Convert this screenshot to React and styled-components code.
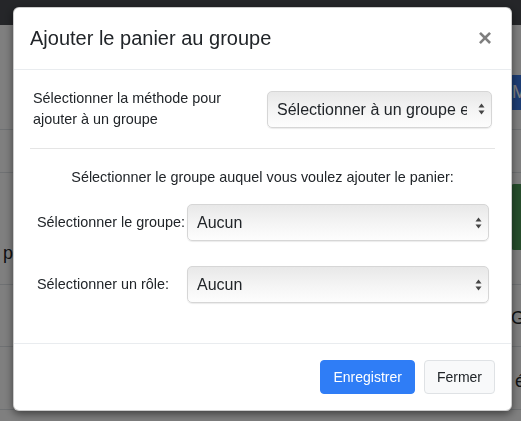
import styled, { createGlobalStyle } from "styled-components";

const GlobalStyle = createGlobalStyle`
    html, body {
        margin: 0;
        padding: 0;
        height: 100%;
        overflow: hidden;
    }
    body {
        font-family: "Liberation Sans", Arial, sans-serif;
        color: #212529;
        background: #fff;
    }
    * {
        box-sizing: border-box;
    }
`;

const SelectArrows = () => (
    <svg width="7" height="12" viewBox="0 0 7 12">
        <path d="M3.5 0.5 L6.5 4.6 L0.5 4.6 Z" fill="#444" />
        <path d="M3.5 11.5 L6.5 7.4 L0.5 7.4 Z" fill="#444" />
    </svg>
);

function Select({ value, width }) {
    return (
        <SelectWrap $width={width}>
            <SelectBox defaultValue={value}>
                <option>{value}</option>
            </SelectBox>
            <ArrowSlot>
                <SelectArrows />
            </ArrowSlot>
        </SelectWrap>
    );
}

function BackgroundPage() {
    return (
        <Page>
            <Navbar />
            <Toolbar>
                <PageButton>M</PageButton>
            </Toolbar>
            <PageRow $height={43} />
            <PageRow $height={112}>
                <RowText>p</RowText>
                <GreenBlock />
            </PageRow>
            <PageRow $height={62}>
                <RowText $right>G</RowText>
            </PageRow>
            <PageRow $height={63}>
                <RowText $right>é</RowText>
            </PageRow>
        </Page>
    );
}

export default function App() {
    return (
        <>
            <GlobalStyle />
            <BackgroundPage />
            <Backdrop>
                <Modal>
                    <ModalHeader>
                        <Title>Ajouter le panier au groupe</Title>
                        <CloseButton aria-label="Close">×</CloseButton>
                    </ModalHeader>
                    <ModalBody>
                        <MethodRow>
                            <MethodLabel>
                                Sélectionner la méthode pour
                                <br />
                                ajouter à un groupe
                            </MethodLabel>
                            <Select value="Sélectionner à un groupe existant" width="225px" />
                        </MethodRow>
                        <Divider />
                        <Intro>Sélectionner le groupe auquel vous voulez ajouter le panier:</Intro>
                        <FieldRow>
                            <FieldLabel>Sélectionner le groupe:</FieldLabel>
                            <Select value="Aucun" width="302px" />
                        </FieldRow>
                        <FieldRow>
                            <FieldLabel>Sélectionner un rôle:</FieldLabel>
                            <Select value="Aucun" width="302px" />
                        </FieldRow>
                    </ModalBody>
                    <ModalFooter>
                        <Button $primary>Enregistrer</Button>
                        <Button>Fermer</Button>
                    </ModalFooter>
                </Modal>
            </Backdrop>
        </>
    );
}

const Page = styled.div`
    display: flex;
    flex-direction: column;
    height: 421px;
    background: #fff;
`;

const Navbar = styled.div`
    height: 25px;
    background: #4a4d52;
    flex-shrink: 0;
`;

const Toolbar = styled.div`
    display: flex;
    justify-content: flex-end;
    align-items: flex-start;
    height: 105px;
    padding-top: 50px;
    border-bottom: 1px solid #dee2e6;
    flex-shrink: 0;
`;

const PageButton = styled.div`
    width: 30px;
    height: 35px;
    background: #3a7ae8;
    color: #fff;
    font-size: 18px;
    line-height: 35px;
    padding-left: 3px;
    margin-right: -18px;
`;

const PageRow = styled.div`
    display: flex;
    align-items: center;
    justify-content: space-between;
    height: ${(p) => p.$height}px;
    border-bottom: 1px solid #dee2e6;
    flex-shrink: 0;
`;

const RowText = styled.span`
    font-size: 18px;
    margin-left: ${(p) => (p.$right ? "auto" : "3px")};
    margin-right: ${(p) => (p.$right ? "-4px" : "0")};
    margin-top: ${(p) => (p.$right ? "6px" : "50px")};
`;

const GreenBlock = styled.div`
    width: 20px;
    height: 66px;
    background: #4d9b58;
    margin-right: -10px;
    margin-top: -24px;
    border-radius: 3px;
`;

const Backdrop = styled.div`
    position: fixed;
    inset: 0;
    background: rgba(0, 0, 0, 0.5);
`;

const Modal = styled.div`
    display: flex;
    flex-direction: column;
    width: 499px;
    margin: 7px 0 0 13px;
    background: #fff;
    border: 1px solid rgba(0, 0, 0, 0.2);
    border-radius: 6px;
    box-shadow: 0 3px 8px rgba(0, 0, 0, 0.5);
`;

const ModalHeader = styled.div`
    display: flex;
    align-items: flex-start;
    justify-content: space-between;
    padding: 15px 16px 16px 16px;
    border-bottom: 1px solid #e9ecef;
`;

const Title = styled.h5`
    margin: 0;
    font-size: 20px;
    font-weight: 400;
    line-height: 1.5;
    color: #212529;
`;

const CloseButton = styled.button`
    background: none;
    border: 0;
    padding: 0;
    margin: 0 3px 0 0;
    font-family: "Liberation Sans", Arial, sans-serif;
    font-size: 24px;
    font-weight: 700;
    line-height: 30px;
    color: #000;
    opacity: 0.5;
    text-shadow: 0 1px 0 #fff;
`;

const ModalBody = styled.div`
    display: flex;
    flex-direction: column;
    padding: 18px 16px 40px;
`;

const MethodRow = styled.div`
    display: flex;
    align-items: center;
    justify-content: space-between;
    padding: 0 3px;
`;

const MethodLabel = styled.label`
    font-size: 14.4px;
    line-height: 21px;
    color: #212529;
`;

const Divider = styled.hr`
    width: 100%;
    margin: 18px 0;
    border: 0;
    border-top: 1px solid #e5e5e5;
`;

const Intro = styled.p`
    margin: 0 0 16px;
    text-align: center;
    font-size: 14.4px;
    line-height: 21px;
`;

const FieldRow = styled.div`
    display: flex;
    align-items: center;
    justify-content: space-between;
    padding: 0 6px 0 7px;
    & + & {
        margin-top: 25px;
    }
`;

const FieldLabel = styled.label`
    font-size: 14.4px;
    line-height: 21px;
`;

const SelectWrap = styled.div`
    position: relative;
    width: ${(p) => p.$width};
    height: 37px;
`;

const SelectBox = styled.select`
    appearance: none;
    width: 100%;
    height: 100%;
    padding: 0 24px 0 9px;
    font-family: "Liberation Sans", Arial, sans-serif;
    font-size: 16px;
    color: #212529;
    border: 1px solid #d6d6d6;
    border-radius: 5px;
    background: linear-gradient(#e8e8e8, #f5f5f5 55%, #fdfdfd);
    box-shadow: 0 1px 1px rgba(0, 0, 0, 0.08);
    outline: none;
`;

const ArrowSlot = styled.span`
    position: absolute;
    right: 7px;
    top: 50%;
    transform: translateY(-50%);
    display: flex;
    pointer-events: none;
`;

const ModalFooter = styled.div`
    display: flex;
    justify-content: flex-end;
    align-items: center;
    gap: 9px;
    padding: 16px;
    border-top: 1px solid #e9ecef;
`;

const Button = styled.button`
    font-family: "Liberation Sans", Arial, sans-serif;
    font-size: 14px;
    line-height: 20px;
    padding: 6px 12px;
    border-radius: 4px;
    border: 1px solid ${(p) => (p.$primary ? "#2f7df6" : "#dfe2e5")};
    background: ${(p) => (p.$primary ? "#2f7df6" : "#f8f9fa")};
    color: ${(p) => (p.$primary ? "#fff" : "#212529")};
    height: 34px;
`;
